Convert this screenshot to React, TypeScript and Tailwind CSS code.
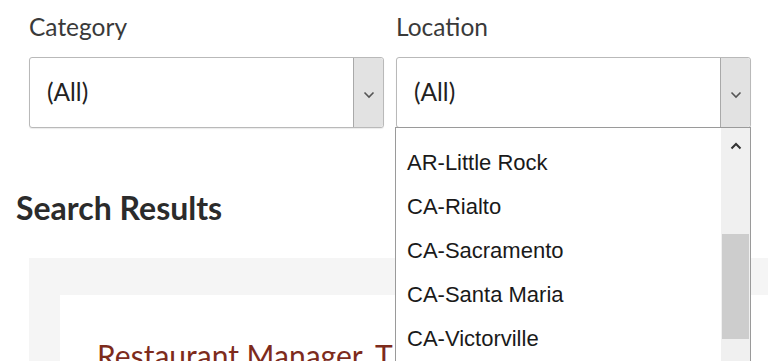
import React from "react";

const Chevron = () => (
  <svg width="12" height="8" viewBox="0 0 12 8" fill="none">
    <path d="M1.5 1.5 L6 6 L10.5 1.5" stroke="#555" strokeWidth="1.6" />
  </svg>
);

function Select({ label }: { label: string }) {
  return (
    <div className="flex flex-col w-[355px]">
      <div className="text-[24.5px] leading-[28px] text-[#3a3a3a] mt-[13px]" style={{ fontFamily: "Lato, sans-serif" }}>
        {label}
      </div>
      <div className="mt-[16px] h-[71px] flex border border-[#b9b9b9] rounded-[3px] bg-white shadow-[0_1px_1px_rgba(0,0,0,0.08)]">
        <div className="flex-1 flex items-center pl-[17px] text-[24.5px] text-[#222]" style={{ fontFamily: "Lato, sans-serif" }}>
          (All)
        </div>
        <div className="w-[30px] bg-[#e2e2e2] border-l border-[#a9a9a9] flex items-center justify-center rounded-r-[3px] pt-[4px]">
          <Chevron />
        </div>
      </div>
    </div>
  );
}

const items = ["AR-Little Rock", "CA-Rialto", "CA-Sacramento", "CA-Santa Maria", "CA-Victorville"];

export default function App() {
  return (
    <div className="relative w-[768px] h-[361px] overflow-hidden bg-white">
      <div className="flex gap-[12px] pl-[29px]">
        <Select label="Category" />
        <Select label="Location" />
      </div>
      <div className="pl-[16px] mt-[62px] text-[32px] leading-[36px] font-bold text-[#2b2b2b]" style={{ fontFamily: "Lato, sans-serif" }}>
        Search Results
      </div>
      <div className="ml-[29px] mt-[32px] bg-[#f5f5f5] pl-[31px] pt-[37px] h-[200px]">
        <div className="bg-white h-[200px] pl-[37px] pt-[43px]">
          <div className="text-[30px] leading-[34px] text-[#7d2b1c] whitespace-nowrap" style={{ fontFamily: "Lato, sans-serif" }}>
            Restaurant Manager, T
          </div>
        </div>
      </div>
      <div className="absolute left-[395px] top-[127px] w-[356px] h-[260px] bg-white border border-[#9a9a9a] flex">
        <div className="flex-1 pt-[12px] pl-[11px]" style={{ fontFamily: "'Liberation Sans', Arial, sans-serif" }}>
          {items.map((it) => (
            <div key={it} className="h-[44px] flex items-center text-[22px] text-[#1a1a1a]">
              {it}
            </div>
          ))}
        </div>
        <div className="w-[29px] bg-[#f0f0f0] flex flex-col items-center">
          <div className="h-[36px] flex items-center justify-center">
            <svg width="12" height="8" viewBox="0 0 12 8">
              <path d="M1.5 6.5 L6 2 L10.5 6.5" stroke="#333" strokeWidth="2" fill="none" />
            </svg>
          </div>
          <div className="mt-[70px] w-[27px] h-[105px] bg-[#cdcdcd]" />
        </div>
      </div>
    </div>
  );
}
